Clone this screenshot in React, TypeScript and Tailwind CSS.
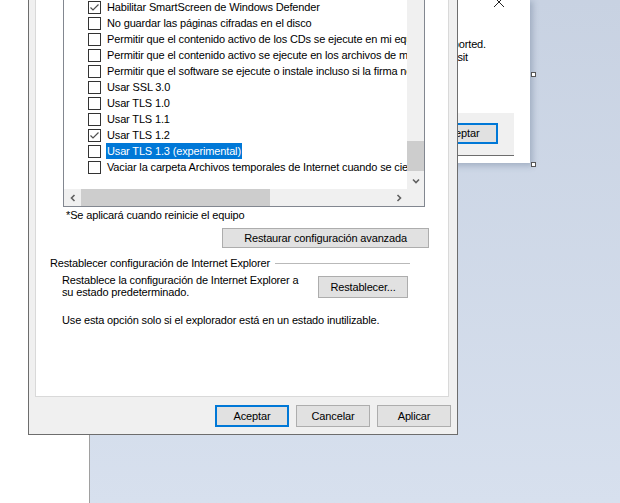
import React from "react";

type Row = { text: string; checked?: boolean; selected?: boolean };

const rows: Row[] = [
  { text: "Habilitar SmartScreen de Windows Defender", checked: true },
  { text: "No guardar las páginas cifradas en el disco" },
  { text: "Permitir que el contenido activo de los CDs se ejecute en mi equipo" },
  { text: "Permitir que el contenido activo se ejecute en los archivos de mi equipo" },
  { text: "Permitir que el software se ejecute o instale incluso si la firma no es válida" },
  { text: "Usar SSL 3.0" },
  { text: "Usar TLS 1.0" },
  { text: "Usar TLS 1.1" },
  { text: "Usar TLS 1.2", checked: true },
  { text: "Usar TLS 1.3 (experimental)", selected: true },
  { text: "Vaciar la carpeta Archivos temporales de Internet cuando se cierre el explorador" },
];

function CheckBox({ checked }: { checked?: boolean }) {
  return (
    <div className="w-[13px] h-[13px] shrink-0 border border-[#333333] bg-white">
      {checked && (
        <svg width="11" height="11" viewBox="0 0 11 11">
          <path d="M1.5 5.5 L4 8 L9.5 2.5" fill="none" stroke="#505050" strokeWidth="1.2" />
        </svg>
      )}
    </div>
  );
}

function Chevron({ dir }: { dir: "down" | "left" | "right" }) {
  const d =
    dir === "down" ? "M1 1.5 L4 4.5 L7 1.5" : dir === "left" ? "M4.5 1 L1.5 4 L4.5 7" : "M1.5 1 L4.5 4 L1.5 7";
  const w = dir === "down" ? 8 : 6;
  const h = dir === "down" ? 6 : 8;
  return (
    <svg width={w} height={h} viewBox={`0 0 ${w} ${h}`}>
      <path d={d} fill="none" stroke="#606060" strokeWidth="1.6" />
    </svg>
  );
}

function Btn({ children, primary, className }: { children: React.ReactNode; primary?: boolean; className?: string }) {
  return (
    <div
      className={
        "flex items-center justify-center bg-[#e1e1e1] whitespace-nowrap " +
        (primary ? "border-2 border-[#0078d7] " : "border border-[#adadad] ") +
        (className ?? "")
      }
    >
      {children}
    </div>
  );
}

export default function App() {
  return (
    <div className="relative w-[620px] h-[503px] overflow-hidden bg-white font-['Liberation_Sans',sans-serif] text-[11px] leading-[13px] tracking-[-0.15px] text-black">
      {/* desktop backdrop */}
      <div className="absolute inset-0 flex">
        <div className="w-[89px] bg-white" />
        <div className="flex-1 border-l border-[#a0a0a0] bg-gradient-to-b from-[#c8d2e2] to-[#d7e0ee]" />
      </div>

      {/* background message window */}
      <div className="absolute left-[440px] top-0 w-[90px] h-[163px] bg-white shadow-[2px_2px_6px_1px_rgba(70,90,120,0.3)] flex flex-col overflow-hidden">
        <div className="relative h-[38px]">
          <svg className="absolute left-[54px] top-[-3px]" width="10" height="10" viewBox="0 0 10 10">
            <path d="M0 0 L10 10 M10 0 L0 10" stroke="#222" strokeWidth="1" />
          </svg>
        </div>
        <div className="flex justify-end w-[46px] whitespace-nowrap">supported.</div>
        <div className="flex justify-end w-[28px] whitespace-nowrap">visit</div>
        <div className="mt-[49px] mr-[16px] h-[43px] bg-[#f0f0f0] border-b border-[#6d6d6d] flex justify-end items-start pt-[10px] pr-[16px]">
          <Btn primary className="w-[74px] h-[21px] shrink-0">Aceptar</Btn>
        </div>
      </div>
      <div className="absolute left-[531px] top-[72px] w-[5px] h-[5px] bg-white border border-[#555]" />
      <div className="absolute left-[531px] top-[162px] w-[5px] h-[5px] bg-white border border-[#555]" />

      {/* main dialog */}
      <div className="absolute left-[28px] top-0 w-[430px] h-[435px] bg-[#f0f0f0] border-x border-b border-[#6d6d6d] flex flex-col">
        <div className="ml-[6px] mr-[8px] h-[397px] bg-white border-x border-b border-[#d9d9d9] flex flex-col">
          {/* listbox */}
          <div className="ml-[27px] w-[362px] h-[207px] border-x border-b border-[#828790] flex flex-col">
            <div className="flex h-[189px]">
              <div className="flex-1 overflow-hidden">
                <div className="mt-[-1px] flex flex-col">
                  {rows.map((r) => (
                    <div key={r.text} className="h-[16px] flex items-center pl-[24px] whitespace-nowrap">
                      <CheckBox checked={r.checked} />
                      {r.selected ? (
                        <span className="ml-[5px] px-[1px] h-[16px] flex items-center bg-[#0078d7] text-white">{r.text}</span>
                      ) : (
                        <span className="ml-[6px]">{r.text}</span>
                      )}
                    </div>
                  ))}
                </div>
              </div>
              <div className="w-[17px] bg-[#f0f0f0] flex flex-col">
                <div className="h-[141px]" />
                <div className="h-[30px] bg-[#cdcdcd]" />
                <div className="flex-1" />
                <div className="h-[17px] flex items-center justify-center">
                  <Chevron dir="down" />
                </div>
              </div>
            </div>
            <div className="h-[17px] flex bg-[#f0f0f0]">
              <div className="w-[17px] flex items-center justify-center">
                <Chevron dir="left" />
              </div>
              <div className="w-[189px] bg-[#cdcdcd]" />
              <div className="flex-1" />
              <div className="w-[17px] flex items-center justify-center">
                <Chevron dir="right" />
              </div>
              <div className="w-[17px]" />
            </div>
          </div>

          <div className="mt-[2px] pl-[30px]">*Se aplicará cuando reinicie el equipo</div>

          <div className="mt-[6px] flex justify-end mr-[19px]">
            <Btn className="w-[207px] h-[20px]">Restaurar configuración avanzada</Btn>
          </div>

          <div className="mt-[9px] pl-[14px] mr-[38px] flex items-center gap-[5px]">
            <span className="whitespace-nowrap">Restablecer configuración de Internet Explorer</span>
            <div className="flex-1 h-px bg-[#b9b9b9]" />
          </div>

          <div className="flex items-start pl-[26px] mr-[40px]">
            <div className="mt-[4px] leading-[12px]">
              Restablece la configuración de Internet Explorer a
              <br />
              su estado predeterminado.
            </div>
            <div className="ml-auto mt-[6px]">
              <Btn className="w-[90px] h-[22px]">Restablecer...</Btn>
            </div>
          </div>

          <div className="mt-[16px] pl-[26px] leading-[12px]">
            Use esta opción solo si el explorador está en un estado inutilizable.
          </div>
        </div>

        <div className="mt-[8px] flex justify-end gap-[7px] pr-[6px]">
          <Btn primary className="w-[74px] h-[22px]">Aceptar</Btn>
          <Btn className="w-[74px] h-[22px]">Cancelar</Btn>
          <Btn className="w-[74px] h-[22px]">Aplicar</Btn>
        </div>
      </div>
    </div>
  );
}
